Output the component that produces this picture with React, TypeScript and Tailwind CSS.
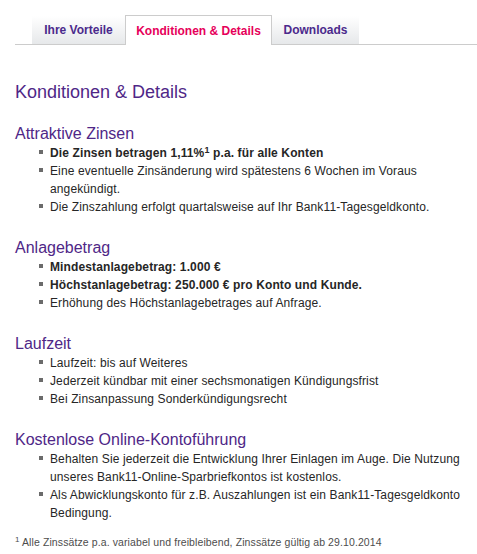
import React from "react";

const font = { fontFamily: '"Liberation Sans", Arial, sans-serif' };

function Bullet({ children, bold }: { children: React.ReactNode; bold?: boolean }) {
  return (
    <li className={`flex ${bold ? "font-bold" : ""}`}>
      <span className="mt-[6px] mr-[7px] h-[4px] w-[4px] shrink-0 bg-[#6b6b6b]" />
      <span>{children}</span>
    </li>
  );
}

function Section({ title, children, first }: { title: string; children: React.ReactNode; first?: boolean }) {
  return (
    <section className={first ? "mt-[21px]" : "mt-[22px]"}>
      <h2 className="text-[16px] leading-[20px] text-[#4f2787]">{title}</h2>
      <ul className="pl-[24px] text-[12px] leading-[18px] tracking-[0.12px] text-[#262626]">{children}</ul>
    </section>
  );
}

export default function App() {
  return (
    <div className="min-h-[554px] w-[477px] bg-white" style={font}>
      <div className="ml-[15px] mt-[15px] flex items-end border-b border-[#cccccc] pl-[17px] text-[12px] font-bold">
        <div className="flex h-[28px] w-[93px] items-center justify-center bg-gradient-to-b from-white to-[#e6e8ea] text-[#4b2a8c]">
          Ihre Vorteile
        </div>
        <div className="-mb-px flex h-[30px] w-[147px] items-center justify-center border border-b-0 border-[#cccccc] bg-white text-[#e6005a]">
          Konditionen &amp; Details
        </div>
        <div className="flex h-[28px] w-[87px] items-center justify-center bg-gradient-to-b from-white to-[#e6e8ea] text-[#4b2a8c]">
          Downloads
        </div>
      </div>

      <div className="w-[465px] pl-[15px]">
        <h1 className="mt-[36px] text-[18px] leading-[22px] text-[#4f2787]">Konditionen &amp; Details</h1>

        <Section title="Attraktive Zinsen" first>
          <Bullet bold>
            Die Zinsen betragen 1,11%<sup className="text-[9px]">1</sup> p.a. für alle Konten
          </Bullet>
          <Bullet>Eine eventuelle Zinsänderung wird spätestens 6 Wochen im Voraus angekündigt.</Bullet>
          <Bullet>Die Zinszahlung erfolgt quartalsweise auf Ihr Bank11-Tagesgeldkonto.</Bullet>
        </Section>

        <Section title="Anlagebetrag">
          <Bullet bold>Mindestanlagebetrag: 1.000 €</Bullet>
          <Bullet bold>Höchstanlagebetrag: 250.000 € pro Konto und Kunde.</Bullet>
          <Bullet>Erhöhung des Höchstanlagebetrages auf Anfrage.</Bullet>
        </Section>

        <Section title="Laufzeit">
          <Bullet>Laufzeit: bis auf Weiteres</Bullet>
          <Bullet>Jederzeit kündbar mit einer sechsmonatigen Kündigungsfrist</Bullet>
          <Bullet>Bei Zinsanpassung Sonderkündigungsrecht</Bullet>
        </Section>

        <Section title="Kostenlose Online-Kontoführung">
          <Bullet>
            Behalten Sie jederzeit die Entwicklung Ihrer Einlagen im Auge. Die Nutzung unseres
            Bank11-Online-Sparbriefkontos ist kostenlos.
          </Bullet>
          <Bullet>
            Als Abwicklungskonto für z.B. Auszahlungen ist ein Bank11-Tagesgeldkonto Bedingung.
          </Bullet>
        </Section>

        <p className="mt-[13px] text-[10.5px] leading-[14px] tracking-[0.1px] text-[#4d4d4d]">
          <sup className="text-[8px]">1</sup> Alle Zinssätze p.a. variabel und freibleibend, Zinssätze gültig ab 29.10.2014
        </p>
      </div>
    </div>
  );
}
